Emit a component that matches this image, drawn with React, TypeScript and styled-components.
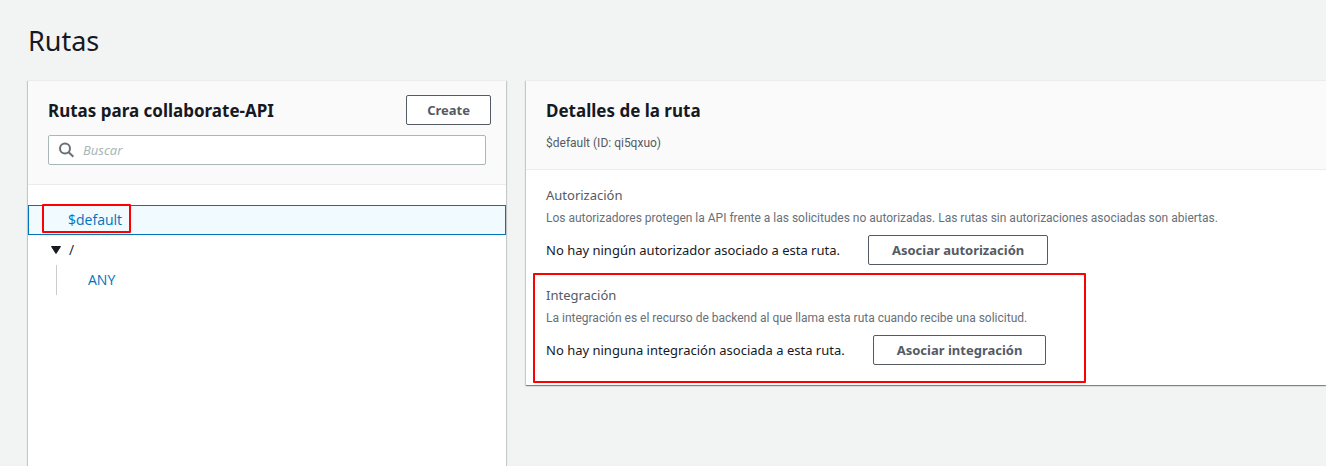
import React from "react";
import styled, { createGlobalStyle } from "styled-components";

const bodyFont = `"Noto Sans", "Open Sans", sans-serif`;
const treeFont = `"Open Sans", "Noto Sans", sans-serif`;
const captionFont = `Roboto, "Noto Sans", sans-serif`;

const GlobalStyle = createGlobalStyle`
  *, *::before, *::after { box-sizing: border-box; }
  body {
    margin: 0;
    background: #f2f3f3;
    color: #16191f;
    font: 400 13px/20px ${bodyFont};
  }
  h1, h2, h3, p, ul { margin: 0; padding: 0; }
`;

const Page = styled.main`
  display: flex;
  flex-direction: column;
  min-height: 100vh;
  padding: 20px 0 0 28px;
  overflow: hidden;
`;

const PageTitle = styled.h1`
  margin-bottom: 18px;
  font-size: 27px;
  font-weight: 400;
  line-height: 42px;
`;

const Columns = styled.div`
  display: flex;
  flex: 1;
  gap: 20px;
`;

const Panel = styled.section<{ $grow?: boolean }>`
  flex: ${(p) => (p.$grow ? "1 1 0" : "0 1 478px")};
  align-self: ${(p) => (p.$grow ? "flex-start" : "stretch")};
  min-width: 0;
  background: #fff;
  border-top: 1px solid #eaeded;
  box-shadow:
    0 1px 1px 0 rgba(0, 28, 36, 0.3),
    1px 1px 1px 0 rgba(0, 28, 36, 0.15),
    -1px 1px 1px 0 rgba(0, 28, 36, 0.15);
`;

const PanelHeader = styled.header`
  padding: 14px 20px 19px;
  background: #fafafa;
  border-bottom: 1px solid #eaeded;
`;

const DetailsHeader = styled(PanelHeader)`
  padding-bottom: 16px;
`;

const HeaderRow = styled.div`
  display: flex;
  align-items: center;
  justify-content: space-between;
  min-height: 30px;
  margin-right: -5px;
`;

const PanelTitle = styled.h2`
  padding-top: 2px;
  font-size: 17px;
  font-weight: 700;
  line-height: 28px;
`;

const Subtitle = styled.p`
  margin-top: 8px;
  color: #545b64;
  font: 400 12px/20px ${captionFont};
`;

const Button = styled.button<{ $wide?: boolean }>`
  height: 30px;
  padding: 0 ${(p) => (p.$wide ? 23 : 20)}px;
  border: 1px solid #545b64;
  border-radius: 2px;
  background: #fff;
  color: #545b64;
  font: inherit;
  font-weight: 700;
  white-space: nowrap;
  cursor: pointer;
`;

const SearchField = styled.label`
  display: flex;
  align-items: center;
  gap: 8px;
  height: 30px;
  margin-top: 10px;
  padding: 0 10px;
  border: 1px solid #aab7b8;
  border-radius: 2px;
  background: #fff;
`;

const SearchInput = styled.input`
  flex: 1;
  min-width: 0;
  padding: 0;
  border: 0;
  outline: 0;
  background: none;
  color: #16191f;
  font: inherit;
  &::placeholder {
    color: #aab7b8;
    font-style: italic;
    opacity: 1;
  }
`;

const Tree = styled.ul`
  padding-top: 20px;
  list-style: none;
  font: 400 14px/20px ${treeFont};
`;

const Branch = styled.ul`
  margin-left: 28px;
  border-left: 1px solid #ccc;
  list-style: none;
`;

const Row = styled.div<{ $indent: number; $selected?: boolean }>`
  display: flex;
  align-items: center;
  height: 30px;
  padding-left: ${(p) => p.$indent}px;
  border: 1px solid ${(p) => (p.$selected ? "#0073bb" : "transparent")};
  background: ${(p) => (p.$selected ? "#f1faff" : "none")};
`;

const RouteLink = styled.a`
  color: #0073bb;
  text-decoration: none;
`;

const Toggle = styled.button`
  display: flex;
  align-items: center;
  gap: 7px;
  padding: 0;
  border: 0;
  background: none;
  color: inherit;
  font: inherit;
  cursor: pointer;
`;

const Marked = styled.div<{ $inset: string }>`
  position: relative;
  &::after {
    content: "";
    position: absolute;
    inset: ${(p) => p.$inset};
    border: 2px solid #f00;
    border-radius: 1px;
    pointer-events: none;
  }
`;

const Details = styled.div`
  display: flex;
  flex-direction: column;
  align-items: flex-start;
  gap: 20px;
  padding: 15px 20px 20px;
`;

const SectionTitle = styled.h3`
  color: #545b64;
  font-size: 13px;
  font-weight: 400;
`;

const Description = styled.p`
  margin: 3px 0 7px;
  color: #687078;
  font: 400 12px/20px ${captionFont};
`;

const Association = styled.div`
  display: flex;
  align-items: center;
  gap: 28px;
`;

const SearchIcon = () => (
  <svg width="16" height="16" viewBox="0 0 16 16" fill="none" stroke="#687078" strokeWidth="2" aria-hidden="true">
    <circle cx="6" cy="6.5" r="5" />
    <path d="M9.7 10.2 14.3 14.8" />
  </svg>
);

const Caret = () => (
  <svg width="12" height="10" viewBox="0 0 12 10" fill="#16191f" aria-hidden="true">
    <path d="M1.5 1.5h9L6 8.5z" stroke="#16191f" strokeLinejoin="round" />
  </svg>
);

type SectionProps = { title: string; description: string; status: string; action: string };

const DetailSection = ({ title, description, status, action }: SectionProps) => (
  <>
    <SectionTitle>{title}</SectionTitle>
    <Description>{description}</Description>
    <Association>
      <p>{status}</p>
      <Button type="button" $wide>{action}</Button>
    </Association>
  </>
);

export default function App() {
  return (
    <Page>
      <GlobalStyle />
      <PageTitle>Rutas</PageTitle>
      <Columns>
        <Panel>
          <PanelHeader>
            <HeaderRow>
              <PanelTitle>Rutas para collaborate-API</PanelTitle>
              <Button type="button">Create</Button>
            </HeaderRow>
            <SearchField>
              <SearchIcon />
              <SearchInput type="search" placeholder="Buscar" aria-label="Buscar" />
            </SearchField>
          </PanelHeader>
          <Tree>
            <li>
              <Row $indent={39} $selected>
                <Marked $inset="-6px -9px -3px -26px">
                  <RouteLink href="#default">$default</RouteLink>
                </Marked>
              </Row>
            </li>
            <li>
              <Row $indent={21}>
                <Toggle type="button" aria-expanded="true">
                  <Caret />
                  <span>/</span>
                </Toggle>
              </Row>
              <Branch>
                <li>
                  <Row $indent={30}>
                    <RouteLink href="#any">ANY</RouteLink>
                  </Row>
                </li>
              </Branch>
            </li>
          </Tree>
        </Panel>
        <Panel $grow>
          <DetailsHeader>
            <PanelTitle>Detalles de la ruta</PanelTitle>
            <Subtitle>$default (ID: qi5qxuo)</Subtitle>
          </DetailsHeader>
          <Details>
            <div>
              <DetailSection
                title="Autorización"
                description="Los autorizadores protegen la API frente a las solicitudes no autorizadas. Las rutas sin autorizaciones asociadas son abiertas."
                status="No hay ningún autorizador asociado a esta ruta."
                action="Asociar autorización"
              />
            </div>
            <Marked $inset="-12px -40px -18px -13px">
              <DetailSection
                title="Integración"
                description="La integración es el recurso de backend al que llama esta ruta cuando recibe una solicitud."
                status="No hay ninguna integración asociada a esta ruta."
                action="Asociar integración"
              />
            </Marked>
          </Details>
        </Panel>
      </Columns>
    </Page>
  );
}
